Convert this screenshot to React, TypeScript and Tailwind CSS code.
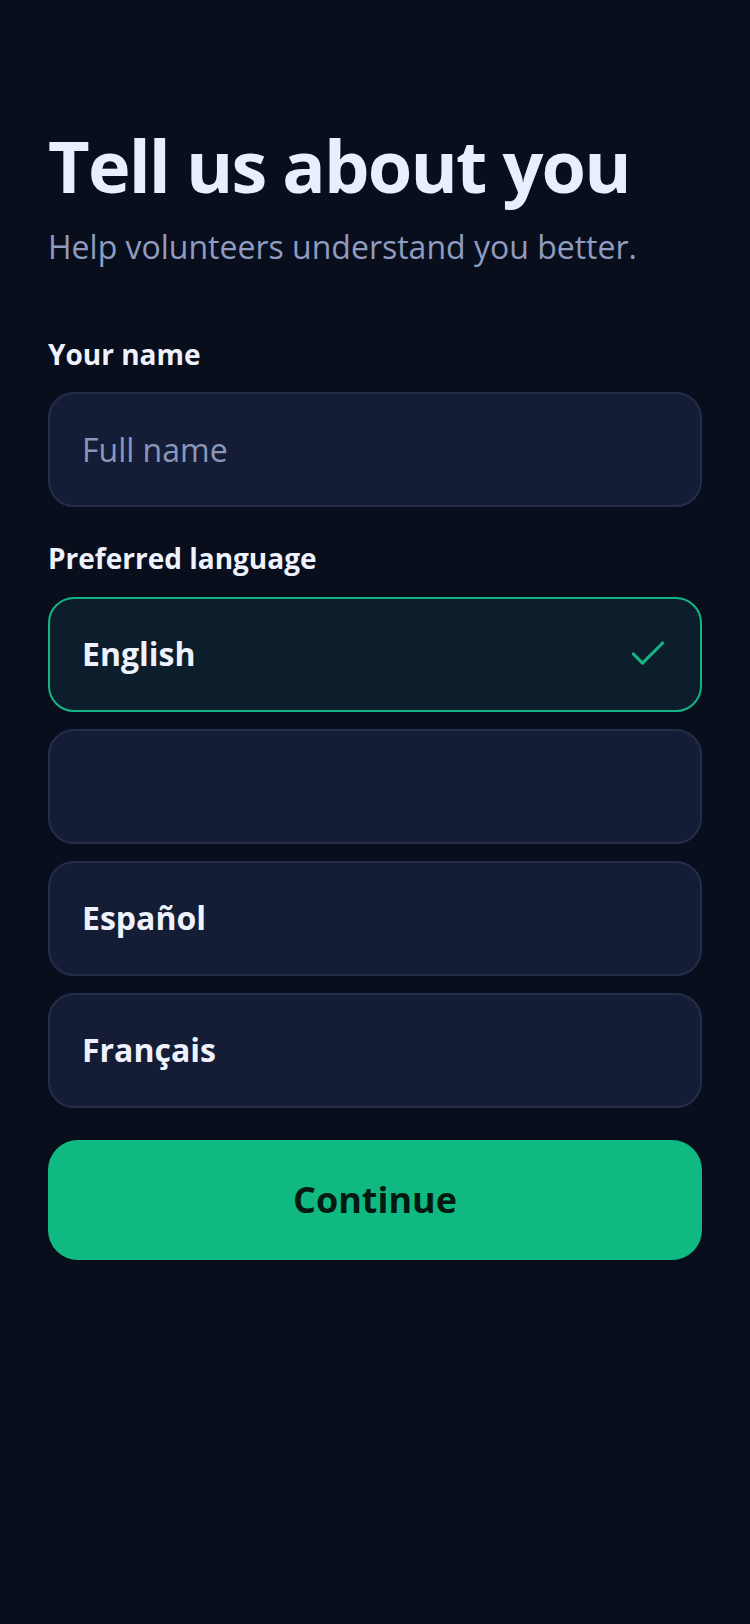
import { Check } from "lucide-react";

const languages = [
  { label: "English", selected: true },
  { label: "", selected: false },
  { label: "Español", selected: false },
  { label: "Français", selected: false },
];

function LanguageOption({ label, selected }: { label: string; selected: boolean }) {
  return (
    <button
      type="button"
      className={`flex h-[115px] w-full items-center justify-between rounded-[26px] border-2 px-8 text-left ${
        selected ? "border-[#14b584] bg-[#0c1e2b]" : "border-[#242e4b] bg-[#151d36]"
      }`}
    >
      <span className="text-[32px] font-bold text-[#eef2fc]">{label}</span>
      {selected && <Check size={44} strokeWidth={1.7} className="mr-[-2px] text-[#14b584]" />}
    </button>
  );
}

export default function App() {
  return (
    <div
      className="min-h-[1624px] w-full bg-[#090e1d] px-12 pt-[126px]"
      style={{ fontFamily: '"Open Sans", "Noto Sans", sans-serif' }}
    >
      {/* header */}
      <h1 className="text-[72px] leading-[1.1] font-bold tracking-tight text-[#e8eeff]">
        Tell us about you
      </h1>
      <p className="mt-5 text-[32px] leading-[1.4] text-[#8f9cc0]">
        Help volunteers understand you better.
      </p>

      {/* name */}
      <label className="mt-[66px] block text-[28px] leading-[1.3] font-bold text-[#eef2fc]">
        Your name
      </label>
      <div className="mt-5 flex h-[115px] items-center rounded-[26px] border-2 border-[#242e4b] bg-[#151d36] px-8">
        <span className="text-[32px] text-[#8b97b8]">Full name</span>
      </div>

      {/* language */}
      <label className="mt-[33px] block text-[28px] leading-[1.3] font-bold text-[#eef2fc]">
        Preferred language
      </label>
      <div className="mt-5 flex flex-col gap-[17px]">
        {languages.map((l, i) => (
          <LanguageOption key={i} label={l.label} selected={l.selected} />
        ))}
      </div>

      <button
        type="button"
        className="mt-8 flex h-[120px] w-full items-center justify-center rounded-[30px] bg-[#10b981] text-[36px] font-bold text-[#04190f]"
      >
        Continue
      </button>
    </div>
  );
}
